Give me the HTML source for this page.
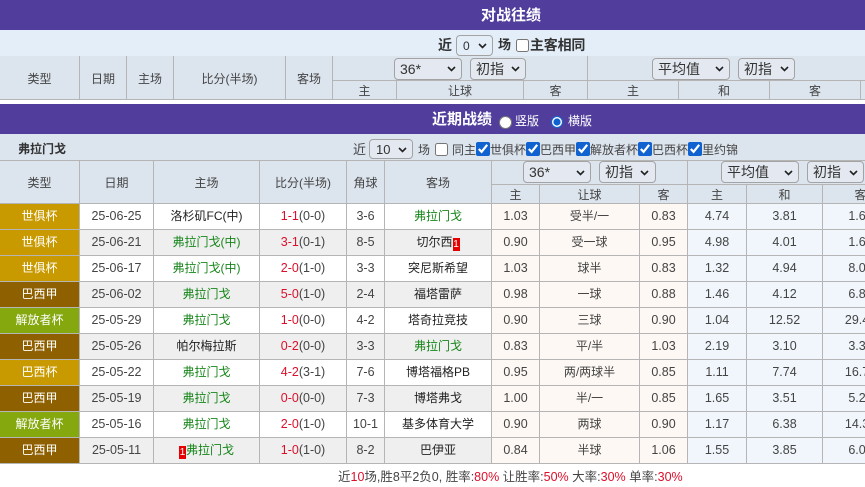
<!DOCTYPE html>
<html lang="zh"><head><meta charset="utf-8"><title>对战往绩</title>
<style>
html,body{margin:0;padding:0;background:#fff}
body{width:865px;height:487px;overflow:hidden;position:relative;font:12px/16px "Liberation Sans","Noto Sans CJK SC",sans-serif;color:#444}
.a{position:absolute;white-space:nowrap}
.bar{position:absolute;left:0;width:865px}
.p{background:#513e9c}
.tt{color:#fff;font-weight:bold;font-size:15px;line-height:20px}
table{position:absolute;left:0;border-collapse:separate;border-spacing:0;table-layout:fixed}
td,th{box-sizing:border-box;padding:0;border-right:1px solid #b5b5b5;border-bottom:1px solid #b5b5b5;text-align:center;font-weight:normal;overflow:hidden;white-space:nowrap}
th{background:#dce4ee;color:#444;padding-top:2px}
#u{top:56px;width:905px}
#l{top:160px;width:899px}
#l td{height:26px;line-height:25px;font-size:12.5px}
#l td i{font-style:normal;font-size:12px}
#l td.h{color:#fff;font-size:12px}
#l td.y{background:#c99a00}#l td.b{background:#8f6000}#l td.g{background:#85a80f}
.e td{background:#efefef}
#l tr td.w{background:#fdf8f4}
#l tr td.c{background:#f0f6fb}
.gr{color:#17861a}.bk{color:#222}
.r{color:#dc0f2b}
.rk{display:inline-block;background:#e60000;color:#fff;width:7px;height:13px;line-height:13px;font-size:10px;vertical-align:-1px;text-align:center}
select{position:absolute;box-sizing:border-box;margin:0;padding:0 0 0 5px;height:22px;-webkit-appearance:none;appearance:none;background:#e4e9f1;border:1px solid #a3a3a3;border-radius:4px;font:14px "Liberation Sans","Noto Sans CJK SC",sans-serif;color:#333}
input{position:absolute;margin:0;width:13px;height:13px;accent-color:#0f62d0}
svg{position:absolute;width:9px;height:6px;fill:none;stroke:#222;stroke-width:1.6;pointer-events:none}
</style></head><body>
<div class="bar p" style="top:0;height:30px"></div>
<div class="a tt" style="left:481px;top:6px">对战往绩</div>
<div class="bar" style="top:30px;height:26px;background:#e3eef8"></div>
<div class="a" style="left:438px;top:37px;font-size:14px;font-weight:bold;color:#333">近</div>
<select style="left:456px;top:35px;width:37px;height:21px;font-size:12px;background:#e3eef8;padding-left:6px"><option>0</option></select>
<svg viewBox="0 0 9 6" style="left:478px;top:43px"><path d="M1 1l3.500 3.500L8 1"/></svg>
<div class="a" style="left:498px;top:37px;font-size:13px;font-weight:bold;color:#333">场</div>
<input type="checkbox" style="left:516px;top:39px">
<div class="a" style="left:530px;top:37px;font-size:14px;font-weight:bold;color:#333;letter-spacing:-.2px">主客相同</div>

<table id="u"><colgroup><col style="width:80px"><col style="width:47px"><col style="width:47px"><col style="width:112px"><col style="width:47px"><col style="width:64px"><col style="width:127px"><col style="width:64px"><col style="width:91px"><col style="width:91px"><col style="width:91px"><col style="width:44px"></colgroup>
<tr style="height:25px"><th rowspan="2">类型</th><th rowspan="2">日期</th><th rowspan="2">主场</th><th rowspan="2">比分(半场)</th><th rowspan="2">客场</th><th colspan="3"></th><th colspan="4"></th></tr>
<tr style="height:19px"><th>主</th><th>让球</th><th>客</th><th>主</th><th>和</th><th>客</th><th style="border-right:0"></th></tr></table>
<select style="left:394px;top:58px;width:68px"><option>36*</option></select>
<svg viewBox="0 0 9 6" style="left:447px;top:66px"><path d="M1 1l3.500 3.500L8 1"/></svg>
<select style="left:470px;top:58px;width:56px"><option>初指</option></select>
<svg viewBox="0 0 9 6" style="left:511px;top:66px"><path d="M1 1l3.500 3.500L8 1"/></svg>
<select style="left:652px;top:58px;width:78px"><option>平均值</option></select>
<svg viewBox="0 0 9 6" style="left:715px;top:66px"><path d="M1 1l3.500 3.500L8 1"/></svg>
<select style="left:738px;top:58px;width:57px"><option>初指</option></select>
<svg viewBox="0 0 9 6" style="left:780px;top:66px"><path d="M1 1l3.500 3.500L8 1"/></svg>

<div class="bar p" style="top:104px;height:30px"></div>
<div class="a tt" style="left:432px;top:110px">近期战绩</div>
<input type="radio" style="left:499px;top:116px;width:13px;height:13px">
<div class="a" style="left:515px;top:113px;color:#fff">竖版</div>
<input type="radio" checked style="left:551px;top:116px;width:12px;height:12px">
<div class="a" style="left:568px;top:113px;color:#fff">横版</div>

<div class="bar" style="top:134px;height:27px;background:#dce4ee"></div>
<div class="a" style="left:18px;top:141px;font-weight:bold;color:#333">弗拉门戈</div>
<div class="a" style="left:353px;top:142px;font-size:13px">近</div>
<select style="left:369px;top:139px;width:44px;height:20px;font-size:13px;padding-left:6px"><option>10</option></select>
<svg viewBox="0 0 9 6" style="left:398px;top:147px"><path d="M1 1l3.500 3.500L8 1"/></svg>
<div class="a" style="left:418px;top:142px">场</div>
<input type="checkbox" style="left:435px;top:143px">
<div class="a" style="left:452px;top:142px">同主</div>
<input type="checkbox" checked style="left:476px;top:142px;width:14px;height:14px"><div class="a" style="left:490px;top:142px">世俱杯</div>
<input type="checkbox" checked style="left:526px;top:142px;width:14px;height:14px"><div class="a" style="left:540px;top:142px">巴西甲</div>
<input type="checkbox" checked style="left:576px;top:142px;width:14px;height:14px"><div class="a" style="left:590px;top:142px">解放者杯</div>
<input type="checkbox" checked style="left:638px;top:142px;width:14px;height:14px"><div class="a" style="left:652px;top:142px">巴西杯</div>
<input type="checkbox" checked style="left:688px;top:142px;width:14px;height:14px"><div class="a" style="left:702px;top:142px">里约锦</div>

<table id="l"><colgroup><col style="width:80px"><col style="width:74px"><col style="width:106px"><col style="width:87px"><col style="width:38px"><col style="width:107px"><col style="width:48px"><col style="width:100px"><col style="width:48px"><col style="width:59px"><col style="width:76px"><col style="width:76px"></colgroup>
<tr style="height:25px"><th rowspan="2" style="border-top:1px solid #b5b5b5">类型</th><th rowspan="2" style="border-top:1px solid #b5b5b5">日期</th><th rowspan="2" style="border-top:1px solid #b5b5b5">主场</th><th rowspan="2" style="border-top:1px solid #b5b5b5">比分(半场)</th><th rowspan="2" style="border-top:1px solid #b5b5b5">角球</th><th rowspan="2" style="border-top:1px solid #b5b5b5">客场</th><th colspan="3" style="border-top:1px solid #b5b5b5"></th><th colspan="3" style="border-top:1px solid #b5b5b5"></th></tr>
<tr style="height:19px"><th>主</th><th>让球</th><th>客</th><th>主</th><th>和</th><th>客</th></tr>
<tr><td class="h y">世俱杯</td><td>25-06-25</td><td class="bk"><i>洛杉矶FC(中)</i></td><td><span class="r">1-1</span>(0-0)</td><td>3-6</td><td class="gr"><i>弗拉门戈</i></td><td class="w">1.03</td><td class="w"><i>受半/一</i></td><td class="w">0.83</td><td class="c">4.74</td><td class="c">3.81</td><td class="c">1.66</td></tr>
<tr class="e"><td class="h y">世俱杯</td><td>25-06-21</td><td class="gr"><i>弗拉门戈(中)</i></td><td><span class="r">3-1</span>(0-1)</td><td>8-5</td><td class="bk"><i>切尔西</i><span class="rk">1</span></td><td class="w">0.90</td><td class="w"><i>受一球</i></td><td class="w">0.95</td><td class="c">4.98</td><td class="c">4.01</td><td class="c">1.61</td></tr>
<tr><td class="h y">世俱杯</td><td>25-06-17</td><td class="gr"><i>弗拉门戈(中)</i></td><td><span class="r">2-0</span>(1-0)</td><td>3-3</td><td class="bk"><i>突尼斯希望</i></td><td class="w">1.03</td><td class="w"><i>球半</i></td><td class="w">0.83</td><td class="c">1.32</td><td class="c">4.94</td><td class="c">8.03</td></tr>
<tr class="e"><td class="h b">巴西甲</td><td>25-06-02</td><td class="gr"><i>弗拉门戈</i></td><td><span class="r">5-0</span>(1-0)</td><td>2-4</td><td class="bk"><i>福塔雷萨</i></td><td class="w">0.98</td><td class="w"><i>一球</i></td><td class="w">0.88</td><td class="c">1.46</td><td class="c">4.12</td><td class="c">6.80</td></tr>
<tr><td class="h g">解放者杯</td><td>25-05-29</td><td class="gr"><i>弗拉门戈</i></td><td><span class="r">1-0</span>(0-0)</td><td>4-2</td><td class="bk"><i>塔奇拉竞技</i></td><td class="w">0.90</td><td class="w"><i>三球</i></td><td class="w">0.90</td><td class="c">1.04</td><td class="c">12.52</td><td class="c">29.40</td></tr>
<tr class="e"><td class="h b">巴西甲</td><td>25-05-26</td><td class="bk"><i>帕尔梅拉斯</i></td><td><span class="r">0-2</span>(0-0)</td><td>3-3</td><td class="gr"><i>弗拉门戈</i></td><td class="w">0.83</td><td class="w"><i>平/半</i></td><td class="w">1.03</td><td class="c">2.19</td><td class="c">3.10</td><td class="c">3.30</td></tr>
<tr><td class="h y">巴西杯</td><td>25-05-22</td><td class="gr"><i>弗拉门戈</i></td><td><span class="r">4-2</span>(3-1)</td><td>7-6</td><td class="bk"><i>博塔福格PB</i></td><td class="w">0.95</td><td class="w"><i>两/两球半</i></td><td class="w">0.85</td><td class="c">1.11</td><td class="c">7.74</td><td class="c">16.70</td></tr>
<tr class="e"><td class="h b">巴西甲</td><td>25-05-19</td><td class="gr"><i>弗拉门戈</i></td><td><span class="r">0-0</span>(0-0)</td><td>7-3</td><td class="bk"><i>博塔弗戈</i></td><td class="w">1.00</td><td class="w"><i>半/一</i></td><td class="w">0.85</td><td class="c">1.65</td><td class="c">3.51</td><td class="c">5.20</td></tr>
<tr><td class="h g">解放者杯</td><td>25-05-16</td><td class="gr"><i>弗拉门戈</i></td><td><span class="r">2-0</span>(1-0)</td><td>10-1</td><td class="bk"><i>基多体育大学</i></td><td class="w">0.90</td><td class="w"><i>两球</i></td><td class="w">0.90</td><td class="c">1.17</td><td class="c">6.38</td><td class="c">14.30</td></tr>
<tr class="e"><td class="h b">巴西甲</td><td>25-05-11</td><td class="gr"><span class="rk">1</span><i>弗拉门戈</i></td><td><span class="r">1-0</span>(1-0)</td><td>8-2</td><td class="bk"><i>巴伊亚</i></td><td class="w">0.84</td><td class="w"><i>半球</i></td><td class="w">1.06</td><td class="c">1.55</td><td class="c">3.85</td><td class="c">6.00</td></tr>
</table>
<select style="left:523px;top:161px;width:68px"><option>36*</option></select>
<svg viewBox="0 0 9 6" style="left:576px;top:170px"><path d="M1 1l3.500 3.500L8 1"/></svg>
<select style="left:599px;top:161px;width:57px"><option>初指</option></select>
<svg viewBox="0 0 9 6" style="left:640px;top:170px"><path d="M1 1l3.500 3.500L8 1"/></svg>
<select style="left:721px;top:161px;width:78px"><option>平均值</option></select>
<svg viewBox="0 0 9 6" style="left:784px;top:170px"><path d="M1 1l3.500 3.500L8 1"/></svg>
<select style="left:807px;top:161px;width:57px"><option>初指</option></select>
<svg viewBox="0 0 9 6" style="left:849px;top:170px"><path d="M1 1l3.500 3.500L8 1"/></svg>

<div class="a" style="left:338px;top:469px;font-size:12.5px">近<span class="r">10</span>场,胜8平2负0, 胜率:<span class="r">80%</span> 让胜率:<span class="r">50%</span> 大率:<span class="r">30%</span> 单率:<span class="r">30%</span></div>
</body></html>
